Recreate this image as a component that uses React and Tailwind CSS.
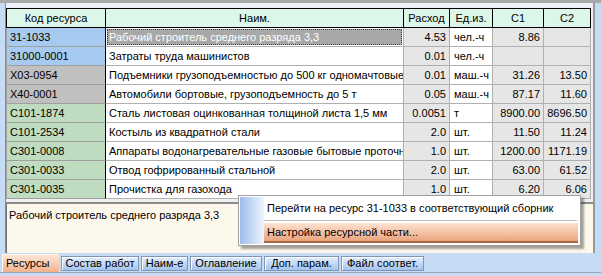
import React from "react";

const rows = [
  { code: "31-1033", name: "Рабочий строитель среднего разряда 3,3", qty: "4.53", unit: "чел.-ч", c1: "8.86", c2: "", kind: "blue", sel: true },
  { code: "31000-0001", name: "Затраты труда машинистов", qty: "0.01", unit: "чел.-ч", c1: "", c2: "", kind: "blue" },
  { code: "X03-0954", name: "Подъемники грузоподъемностью до 500 кг одномачтовые", qty: "0.01", unit: "маш.-ч", c1: "31.26", c2: "13.50", kind: "gray" },
  { code: "X40-0001", name: "Автомобили бортовые, грузоподъемность до 5 т", qty: "0.05", unit: "маш.-ч", c1: "87.17", c2: "11.60", kind: "gray" },
  { code: "C101-1874", name: "Сталь листовая оцинкованная толщиной листа 1,5 мм", qty: "0.0051", unit: "т", c1: "8900.00", c2: "8696.50", kind: "green" },
  { code: "C101-2534", name: "Костыль из квадратной стали", qty: "2.0", unit: "шт.", c1: "11.50", c2: "11.24", kind: "green" },
  { code: "C301-0008", name: "Аппараты водонагревательные газовые бытовые проточные", qty: "1.0", unit: "шт.", c1: "1200.00", c2: "1171.19", kind: "green" },
  { code: "C301-0033", name: "Отвод гофрированный стальной", qty: "2.0", unit: "шт.", c1: "63.00", c2: "61.52", kind: "green" },
  { code: "C301-0035", name: "Прочистка для газохода", qty: "1.0", unit: "шт.", c1: "6.20", c2: "6.06", kind: "green" },
];

const codeBg = {
  blue: "bg-[#a6caf0]",
  gray: "bg-[#c0c0c0]",
  green: "bg-[#c0dcc0]",
};

const tabs = [
  { t: "Состав работ", w: "w-[78px]" },
  { t: "Наим-е", w: "w-[47px]" },
  { t: "Оглавление", w: "w-[72px]" },
  { t: "Доп. парам.", w: "w-[75px]" },
  { t: "Файл соответ.", w: "w-[83px]" },
];

const cell = "h-[19px] flex items-center whitespace-nowrap overflow-hidden";

export default function App() {
  return (
    <div
      className="relative w-[601px] h-[276px] overflow-hidden bg-[#c6dcf5] text-[11px] leading-none text-black"
      style={{ fontFamily: '"Liberation Sans", Arial, sans-serif' }}
    >
      <div className="h-[3px] bg-[#a8a8a8]" />
      <div className="flex h-[250px]">
        <div className="w-[5px] bg-[#c6dcf5]" />
        <div className="flex flex-col w-[590px] border-l border-[#8c8c8c] border-r-2 border-r-[#9a9a9a] bg-[#eef2f8]">
          <div className="h-[5px]" />
          {/* grid */}
          <div className="h-[191px] overflow-hidden">
            <div className="grid grid-cols-[100px_298px_46px_43px_51px_47px] w-[585px] border-t border-black">
              {["Код ресурса", "Наим.", "Расход", "Ед.из.", "C1", "C2"].map((h, i) => (
                <div
                  key={h}
                  className={`${cell} justify-center bg-[#dcf6ea] border-b border-r border-black ${i === 0 ? "border-l" : ""}`}
                >
                  {h}
                </div>
              ))}
              {rows.map((r) => (
                <React.Fragment key={r.code}>
                  <div className={`${cell} pl-[3px] border-b border-l border-[#a0a0a0] border-r border-r-black ${codeBg[r.kind]}`}>
                    {r.code}
                  </div>
                  {r.sel ? (
                    <div className="h-[19px] bg-white border-b border-r border-[#b0b0b0] p-px">
                      <div className="h-full flex items-center pl-[2px] bg-[#a8a8a8] text-white whitespace-nowrap overflow-hidden outline-1 outline-dotted outline-[#404040] -outline-offset-1">
                        {r.name}
                      </div>
                    </div>
                  ) : (
                    <div className={`${cell} pl-[3px] bg-white border-b border-r border-[#b0b0b0]`}>
                      {r.name}
                    </div>
                  )}
                  <div className={`${cell} justify-end pr-[3px] bg-[#e6e6e6] border-b border-r border-[#b0b0b0]`}>
                    {r.qty}
                  </div>
                  <div className={`${cell} pl-[4px] bg-white border-b border-r border-[#b0b0b0]`}>
                    {r.unit}
                  </div>
                  <div className={`${cell} justify-end pr-[3px] bg-[#e6e6e6] border-b border-r border-[#b0b0b0]`}>
                    {r.c1}
                  </div>
                  <div className={`${cell} justify-end pr-[3px] bg-[#e6e6e6] border-b border-r border-[#b0b0b0]`}>
                    {r.c2}
                  </div>
                </React.Fragment>
              ))}
            </div>
          </div>
          {/* splitter */}
          <div className="h-[5px] bg-[#f0f0f0] border-b-2 border-[#8a8a8a]" />
          {/* memo */}
          <div className="flex-1 bg-[#fdf8ec] border-l border-[#707070] pl-[2px] pt-[6px]">
            Рабочий строитель среднего разряда 3,3
          </div>
        </div>
        <div className="flex-1" />
      </div>

      {/* tabs */}
      <div className="flex items-end h-[20px] pl-[2px] gap-[2px] border-b border-[#9aa8b8]">
        <div className="w-[57px] h-[18px] flex items-center pl-[3px] bg-gradient-to-b from-[#fde6d6] to-[#f1b38c] border-t border-l border-[#fff3ea]">
          Ресурсы
        </div>
        {tabs.map((t) => (
          <div
            key={t.t}
            className={`${t.w} h-[15px] mb-[1px] flex items-center justify-center whitespace-nowrap bg-gradient-to-b from-[#e4eefb] to-[#a4c4ee] border border-[#7f95b5] shadow-[inset_1px_1px_0_#ffffff]`}
          >
            {t.t}
          </div>
        ))}
      </div>

      {/* context menu */}
      <div className="absolute left-[238px] top-[195px] w-[343px] h-[51px] bg-white border border-[#a0a0a0] shadow-[3px_3px_2px_rgba(0,0,0,0.35)] flex">
        <div className="w-[24px] my-px ml-px bg-gradient-to-r from-[#9fbde9] to-[#eef4fd]" />
        <div className="flex-1 flex flex-col">
          <div className="h-[22px] flex items-center pl-[3px] pt-[2px] whitespace-nowrap">
            Перейти на ресурс 31-1033 в соответствующий сборник
          </div>
          <div className="h-[1px] bg-[#b8b8b8] mr-[3px] mt-[2px]" />
          <div className="h-[20px] mt-[2px] mr-[2px] flex items-center pl-[3px] bg-gradient-to-b from-[#fde3d2] to-[#eba47c] border-b-2 border-[#a8683f] whitespace-nowrap">
            Настройка ресурсной части...
          </div>
        </div>
      </div>
    </div>
  );
}
